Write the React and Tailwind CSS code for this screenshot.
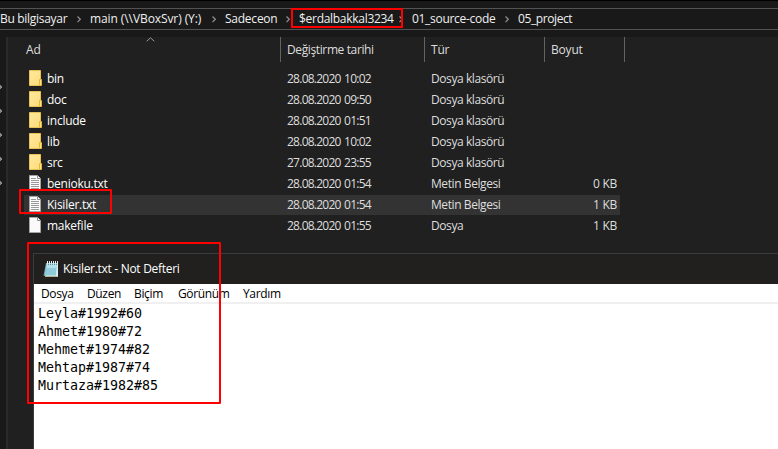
import React from 'react';

const rows = [
  ['folder', 'bin', '28.08.2020 10:02', 'Dosya klasörü', ''],
  ['folder', 'doc', '28.08.2020 09:50', 'Dosya klasörü', ''],
  ['folder', 'include', '28.08.2020 01:51', 'Dosya klasörü', ''],
  ['folder', 'lib', '28.08.2020 10:02', 'Dosya klasörü', ''],
  ['folder', 'src', '27.08.2020 23:55', 'Dosya klasörü', ''],
  ['text', 'benioku.txt', '28.08.2020 01:54', 'Metin Belgesi', '0 KB'],
  ['text', 'Kisiler.txt', '28.08.2020 01:54', 'Metin Belgesi', '1 KB'],
  ['blank', 'makefile', '28.08.2020 01:55', 'Dosya', '1 KB'],
];

const crumbs = [
  ['Bu bilgisayar', 'w-[90px] tracking-[-0.3px]'],
  ['main (\\\\VBoxSvr) (Y:)', 'w-[135px] tracking-[-0.09px]'],
  ['Sadeceon', 'w-[74px] tracking-[-0.24px]'],
  ['$erdalbakkal3234', 'w-[113px] tracking-[-0.29px]'],
  ['01_source-code', 'w-[106px] tracking-[-0.3px]'],
  ['05_project', 'w-[80px] tracking-[-0.4px]'],
];

const lines = ['Leyla#1992#60', 'Ahmet#1980#72', 'Mehmet#1974#82', 'Mehtap#1987#74', 'Murtaza#1982#85'];

function Folder() {
  return (
    <svg width="13" height="16" viewBox="0 0 13 16" className="mb-[2px] shrink-0">
      <defs>
        <linearGradient id="fold" x1="0" y1="0" x2="1" y2="1">
          <stop offset="0" stopColor="#ffe9a0" />
          <stop offset="1" stopColor="#ffdc78" />
        </linearGradient>
      </defs>
      <path d="M0.5 0.5H11.5V15.5H0.5Z" fill="url(#fold)" stroke="#e9c253" />
      <path d="M10.5 9.5H12.5V15.5H10.5Z" fill="#ffe289" stroke="#e3b840" />
    </svg>
  );
}

function Doc({ lined }) {
  return (
    <svg width="13" height="16" viewBox="0 0 13 16" className="mb-[2px] shrink-0">
      <path d="M0.5 0.5H8.5L11.5 3.5V15.5H0.5Z" fill="#fafafa" stroke="#a5a5a5" />
      <path d="M8.5 0.5V3.5H11.5" fill="#fff" stroke="#8c8c8c" />
      {lined && <path d="M2 3.5H7M2 5.5H10M2 7.5H10M2 9.5H10M2 11.5H10M2 13.5H10" stroke="#9a9a9a" />}
    </svg>
  );
}

function NotepadIcon() {
  return (
    <svg width="16" height="17" viewBox="0 0 16 17" className="shrink-0">
      <path d="M3 2L0.5 14.5L3 15.5Z" fill="#6e9aa3" />
      <path d="M3.5 2H15V16H2.5Z" fill="#d8f0f4" />
      <path d="M3.5 2H14L13 14.5H1.5Z" fill="#8fcbd8" />
      <path d="M4 3H14L13.7 7H3.5Z" fill="#b5e2e9" />
      <path d="M2 15.5H14.5" stroke="#b9b08f" />
      <path d="M4.5 0V3M6.5 0V3M8.5 0V3M10.5 0V3M12.5 0V3M14.5 0V3" stroke="#e6eeee" />
      <path d="M5 3.5H14" stroke="#5f8f99" strokeDasharray="1 1" />
    </svg>
  );
}

function Pin() {
  return (
    <svg width="3" height="4" viewBox="0 0 3 4" className="shrink-0">
      <path d="M0 0H1V1H2V3H1V4H0Z" fill="#85898c" />
    </svg>
  );
}

export default function App() {
  return (
    <div className="relative flex h-[449px] w-[778px] flex-col overflow-hidden bg-[#191919] font-['Open_Sans','Noto_Sans',sans-serif] text-[12px] leading-[20px] whitespace-nowrap text-[#dedede]">
      <div className="h-px shrink-0 bg-black" />
      <nav className="mt-[7px] flex h-[22px] shrink-0 items-center border-y border-[#535353] text-[#f0f0f0]">
        {crumbs.map(([label, style], i) => (
          <div key={label} className={`relative flex shrink-0 items-center ${style}`}>
            <span>{label}</span>
            {i < 5 && (
              <svg width="4" height="7" viewBox="0 0 4 7" className="absolute right-[9px] top-[7px]">
                <path d="M0.5 0.5L3.3 3.3L0.5 6.1" fill="none" stroke="#8c8c8c" strokeWidth="1.3" />
              </svg>
            )}
          </div>
        ))}
      </nav>
      <div className="mt-[7px] flex min-h-0 flex-1">
        <aside className="flex w-[6px] shrink-0 flex-col gap-5 pt-[48px]">
          <Pin /><Pin /><Pin /><Pin /><Pin />
        </aside>
        <main className="flex min-w-0 flex-1 flex-col border-l-2 border-[#2a2a2a] bg-[#202020] pl-[16px]">
          <header className="relative flex h-[25px] shrink-0 tracking-[-0.2px] leading-[26px]">
            <svg width="9" height="5" viewBox="0 0 9 5" className="absolute left-[122px] top-0">
              <path d="M0.7 4.3L4.5 0.8L8.3 4.3" fill="none" stroke="#9a9a9a" />
            </svg>
            <div className="w-[257px] border-r border-[#636363] pl-[2px]">Ad</div>
            <div className="w-[144px] border-r border-[#636363] pl-[6px] tracking-[-0.38px]">Değiştirme tarihi</div>
            <div className="w-[120px] border-r border-[#636363] pl-[6px]">Tür</div>
            <div className="w-[80px] border-r border-[#636363] pl-[6px]">Boyut</div>
          </header>
          <div className="mt-[7px] flex shrink-0 flex-col gap-px tracking-[-0.25px]">
            {rows.map(([kind, name, date, type, size], i) => (
              <div key={name} className={`flex h-[20px] w-[596px] shrink-0 items-center pl-[5px] ${i === 6 ? 'bg-[#333333]' : ''}`}>
                {kind === 'folder' ? <Folder /> : <Doc lined={kind === 'text'} />}
                <span className="w-[245px] shrink-0 pl-[5px] text-white">{name}</span>
                <span className="w-[144px] shrink-0 tracking-[-0.75px] [word-spacing:1px]">{date}</span>
                <span className="w-[120px] shrink-0 tracking-[-0.42px]">{type}</span>
                <span className="w-[66px] shrink-0 text-right">{size}</span>
              </div>
            ))}
          </div>
          <section className="mt-[17px] -mr-px ml-[9px] flex min-h-0 flex-1 flex-col border-l border-t border-[#3b3b3b] bg-white">
            <div className="flex h-[30px] shrink-0 items-center bg-[#22201e] pl-[9px] text-white tracking-[-0.3px]">
              <NotepadIcon />
              <span className="pl-[4px]">Kisiler.txt - Not Defteri</span>
            </div>
            <div className="flex h-[20px] shrink-0 border-b-2 border-[#f0f0f0] pl-[7px] text-black tracking-[-0.35px]">
              <span className="w-[46px]">Dosya</span>
              <span className="w-[47px]">Düzen</span>
              <span className="w-[44px]">Biçim</span>
              <span className="w-[65px]">Görünüm</span>
              <span>Yardım</span>
            </div>
            <div className="pt-px pl-[4px] font-['DejaVu_Sans_Mono',monospace] text-[13.3px] leading-[18px] text-black">
              {lines.map((line) => <div key={line}>{line}</div>)}
            </div>
          </section>
        </main>
      </div>
      <div className="absolute left-[291px] top-[8px] h-[20px] w-[112px] border-2 border-[#ff0000]" />
      <div className="absolute left-[19px] top-[189px] h-[25px] w-[93px] rounded-[1px] border-2 border-[#ff0000]" />
      <div className="absolute left-[27px] top-[242px] h-[162px] w-[194px] rounded-[1px] border-2 border-[#ff0000]" />
    </div>
  );
}
